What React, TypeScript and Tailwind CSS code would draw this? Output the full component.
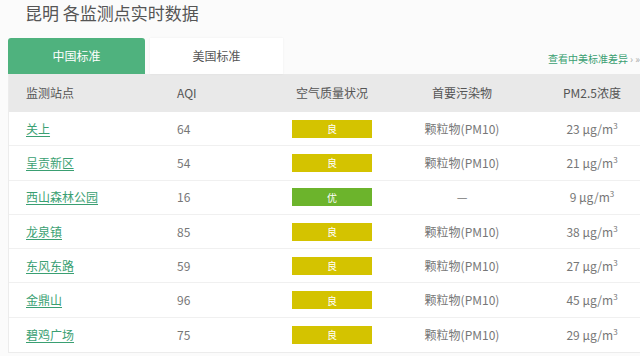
import React from 'react';

type Row = {
    name: string;
    aqi: number;
    level: '良' | '优';
    pollutant: string;
    pm25: number;
};

const rows: Row[] = [
    { name: '关上', aqi: 64, level: '良', pollutant: '颗粒物(PM10)', pm25: 23 },
    { name: '呈贡新区', aqi: 54, level: '良', pollutant: '颗粒物(PM10)', pm25: 21 },
    { name: '西山森林公园', aqi: 16, level: '优', pollutant: '—', pm25: 9 },
    { name: '龙泉镇', aqi: 85, level: '良', pollutant: '颗粒物(PM10)', pm25: 38 },
    { name: '东风东路', aqi: 59, level: '良', pollutant: '颗粒物(PM10)', pm25: 27 },
    { name: '金鼎山', aqi: 96, level: '良', pollutant: '颗粒物(PM10)', pm25: 45 },
    { name: '碧鸡广场', aqi: 75, level: '良', pollutant: '颗粒物(PM10)', pm25: 29 },
];

const grid = 'grid grid-cols-[152px_106px_130px_130px_130px]';

export default function App() {
    return (
        <div
            className="h-[356px] w-[640px] overflow-hidden bg-[#fbfbfb] text-[#6b6b6b]"
            style={{ fontFamily: '"Noto Sans CJK SC", "Liberation Sans", sans-serif' }}
        >
            <h1 className="h-[38px] pl-[25px] pt-[1px] text-[17px] leading-[24px] font-normal text-[#555]">
                昆明 各监测点实时数据
            </h1>

            <div className="flex h-[36px] items-stretch pl-[8px]">
                <div className="flex w-[137px] items-center justify-center rounded-t-[3px] bg-[#4fb27e] text-[12px] text-white">
                    中国标准
                </div>
                <div className="ml-[5px] flex w-[133px] items-center justify-center bg-white text-[12px] text-[#555] shadow-[0_0_2px_rgba(0,0,0,0.06)]">
                    美国标准
                </div>
                <div className="ml-auto flex items-end pb-[8px] text-[10px] text-[#3a9f72]">
                    查看中美标准差异<span className="ml-[2px] text-[#aaa]">› »</span>
                </div>
            </div>

            <div className="ml-[8px] w-[648px] border-b border-l border-[#ececec] bg-white">
                <div className={`${grid} h-[38px] items-center bg-[#e9e9e9] text-[12px] text-[#555]`}>
                    <div className="pl-[17px]">监测站点</div>
                    <div className="pl-[16px]">AQI</div>
                    <div className="text-center">空气质量状况</div>
                    <div className="text-center">首要污染物</div>
                    <div className="text-center">PM2.5浓度</div>
                </div>

                {rows.map((r) => (
                    <div
                        key={r.name}
                        className={`${grid} h-[34.3px] items-center border-b border-[#f0f0f0] text-[12px] last:border-b-0`}
                    >
                        <div className="pl-[17px]">
                            <span className="text-[#3a9f72] underline underline-offset-2">{r.name}</span>
                        </div>
                        <div className="pl-[16px] text-[#777]">{r.aqi}</div>
                        <div className="flex justify-center">
                            <div
                                className={`flex h-[18px] w-[80px] items-center justify-center text-[10px] text-white ${
                                    r.level === '优' ? 'bg-[#6cb42c]' : 'bg-[#d4c300]'
                                }`}
                            >
                                {r.level}
                            </div>
                        </div>
                        <div className="text-center text-[#777]">{r.pollutant}</div>
                        <div className="text-center text-[#777]">
                            {r.pm25} μg/m<span className="text-[8px] align-top">3</span>
                        </div>
                    </div>
                ))}
            </div>
        </div>
    );
}
